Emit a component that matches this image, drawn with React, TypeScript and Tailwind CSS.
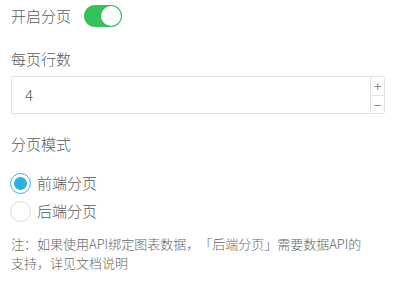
export default function App() {
  return (
    <div
      className="w-[400px] h-[288px] bg-white text-[#5a5a5a] overflow-hidden [text-spacing-trim:space-all]"
      style={{ fontFamily: '"Noto Sans CJK SC", "Noto Sans", sans-serif' }}
    >
      <div className="flex items-center gap-[13px] pl-[11px] pt-[5px] h-[27px]">
        <span className="text-[15px] leading-[22px] font-light">开启分页</span>
        <div className="relative w-[38px] h-[22px] rounded-full bg-[#36c05b]">
          <div className="absolute right-[1px] top-[1px] w-[20px] h-[20px] rounded-full bg-white shadow-[0_0_1px_rgba(0,0,0,0.25)]" />
        </div>
      </div>

      <div className="pl-[11px] pt-[21px] text-[15px] leading-[22px] font-light">每页行数</div>

      <div className="ml-[11px] mt-[6px] w-[374px] h-[38px] flex border border-[#dfe5e6] rounded-[2px]">
        <div className="flex-1 flex items-center pl-[13px] text-[15px] font-light">4</div>
        <div className="w-[14px] flex flex-col border-l border-[#dfe5e6] text-[#888]">
          <div className="flex-1 flex items-center justify-center border-b border-[#dfe5e6] text-[13px] leading-none">+</div>
          <div className="flex-1 flex items-center justify-center text-[13px] leading-none">−</div>
        </div>
      </div>

      <div className="pl-[11px] pt-[19px] text-[15px] leading-[22px] font-light">分页模式</div>

      <div className="pl-[10px] pt-[17px] flex flex-col gap-[6px]">
        <div className="flex items-center gap-[6px] h-[22px]">
          <div className="w-[21px] h-[21px] rounded-full border border-[#2fb0e2] flex items-center justify-center">
            <div className="w-[13px] h-[13px] rounded-full bg-[#2fb0e2]" />
          </div>
          <span className="text-[15px] font-light">前端分页</span>
        </div>
        <div className="flex items-center gap-[6px] h-[22px]">
          <div className="w-[21px] h-[21px] rounded-full border border-[#d5dee0]" />
          <span className="text-[15px] font-light">后端分页</span>
        </div>
      </div>

      <p className="pl-[11px] pr-[10px] pt-[12px] text-[13px] leading-[19px] text-[#666] font-light">
        注：如果使用API绑定图表数据，「后端分页」需要数据API的
        <br />
        支持，详见文档说明
      </p>
    </div>
  )
}
